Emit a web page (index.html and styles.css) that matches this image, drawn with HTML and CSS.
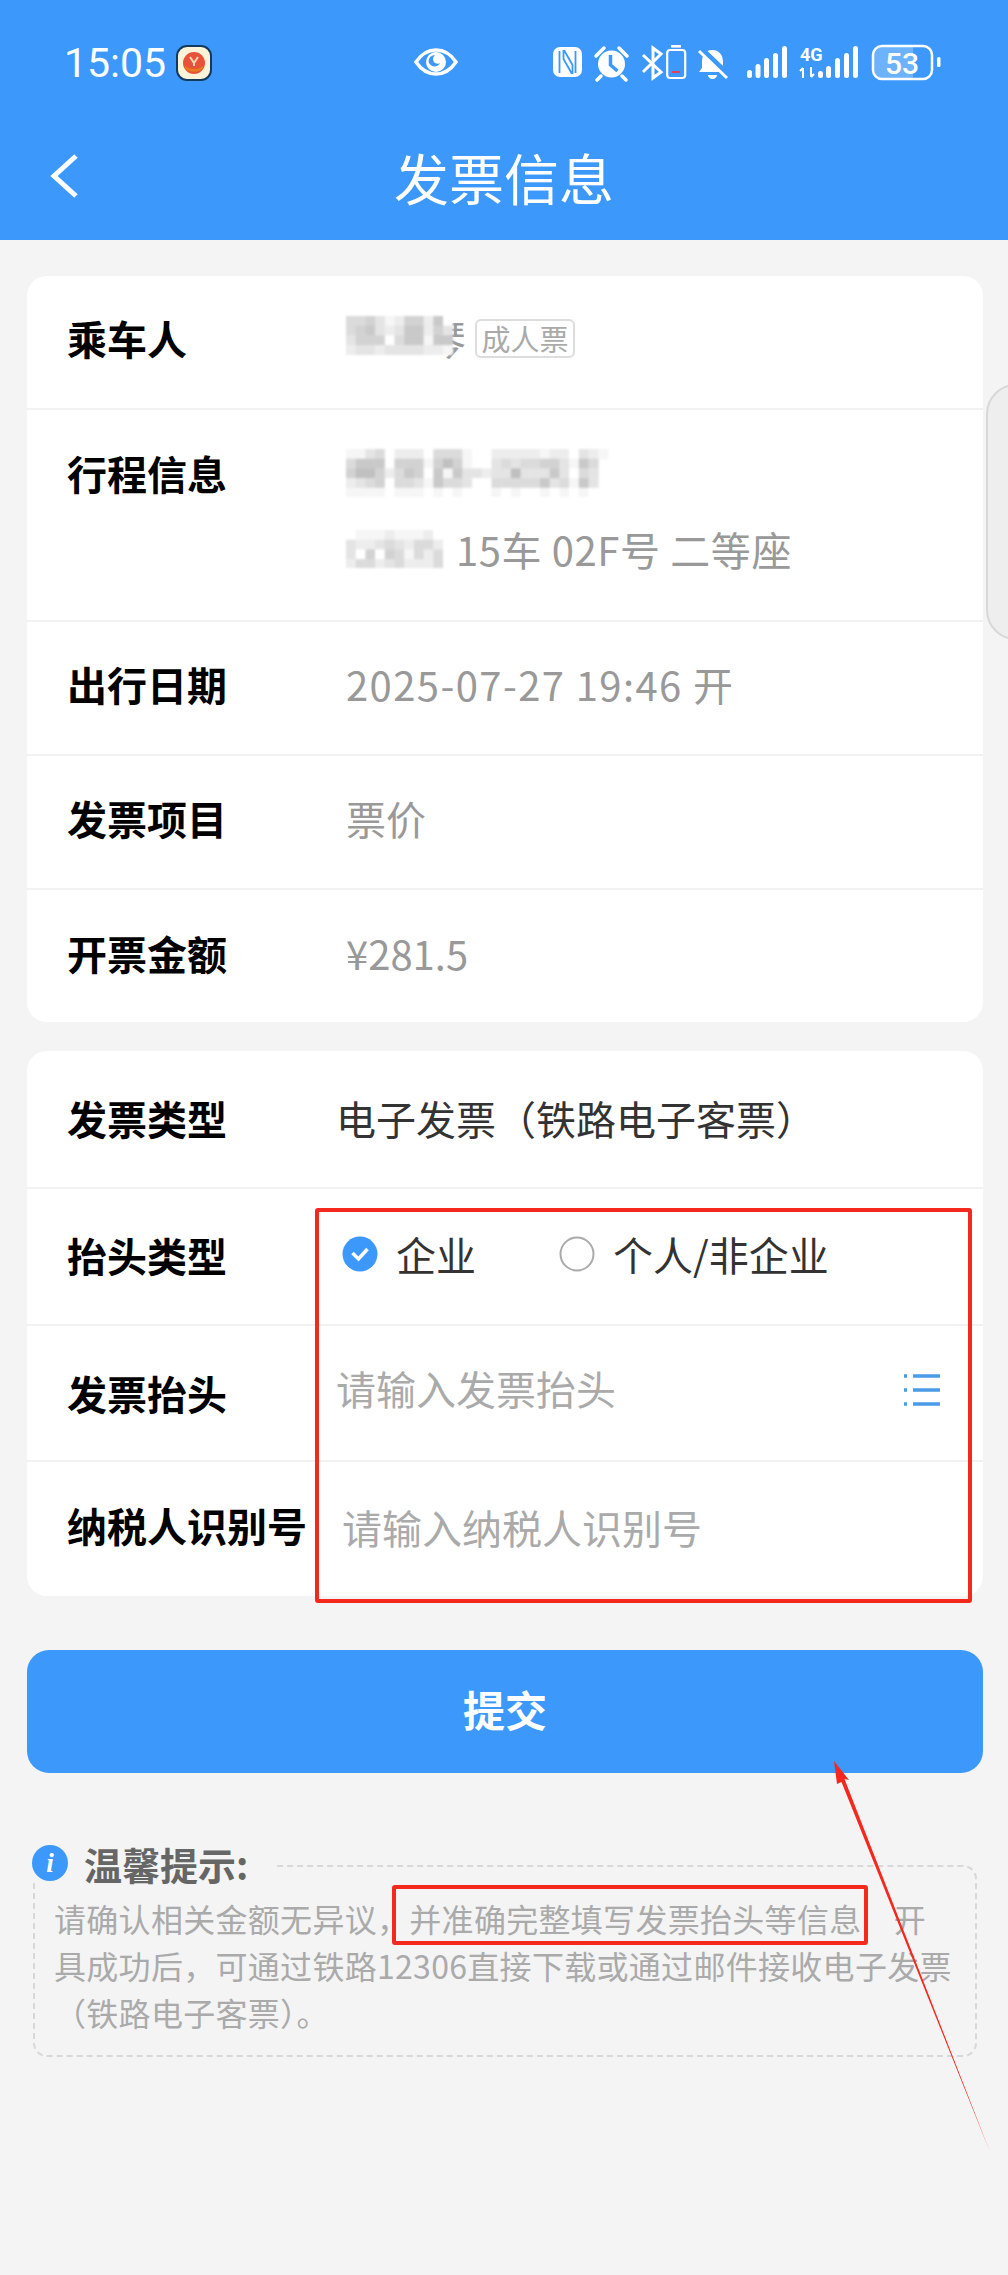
FILE: index.html
```html
<!DOCTYPE html>
<html lang="zh-cn">
<head>
    <meta charset="UTF-8">
    <meta name="viewport" content="width=device-width, initial-scale=1.0">
    <title>发票信息</title>
    <link rel="stylesheet" href="styles.css">
</head>
<body>
    <div class="page">
        <header class="header">
            <div class="status">
                <span class="time">15:05</span>
                <svg class="notif" width="36" height="36" viewBox="0 0 36 36">
                    <rect x="1" y="1" width="34" height="34" rx="10" fill="#fdf3d8" stroke="#123a5c" stroke-width="2"/>
                    <circle cx="18" cy="18" r="11" fill="#e8523a"/>
                    <path d="M9 21c5 4 13 4 18 0v2c-3 5-15 5-18 0z" fill="#e67a1e"/>
                    <path d="M14 12l4 6 4-6M18 18v3" fill="none" stroke="#fbd9b0" stroke-width="2"/>
                </svg>
                <svg class="eye" width="44" height="28" viewBox="0 0 44 28">
                    <path d="M2 14C8 5 15 2 22 2s14 3 20 12c-6 9-13 12-20 12S8 23 2 14z" fill="none" stroke="#fff" stroke-width="3.5"/>
                    <circle cx="22" cy="14" r="10" fill="#fff"/>
                    <path d="M15 11c1-3 4-4 6-4-2 2-3 5 0 8 2 1 4 1 5 0-1 3-5 4-8 3-3-2-4-4-3-7z" fill="#3c99fb"/>
                </svg>
                <svg class="status-icons" width="390" height="40" viewBox="0 0 390 40">
                    <!-- nfc -->
                    <rect x="0" y="3" width="29" height="30" rx="7" fill="#fff"/>
                    <path d="M6.500 7v22M22.500 7v22" fill="none" stroke="#3c99fb" stroke-width="1.800"/>
                    <path d="M10.500 7v8l8 14h1V21L11.500 7z" fill="none" stroke="#3c99fb" stroke-width="1.800"/>
                    <!-- alarm -->
                    <circle cx="58.500" cy="20" r="13.500" fill="#fff"/>
                    <path d="M57.500 11v10l7 6" fill="none" stroke="#3c99fb" stroke-width="3.500"/>
                    <path d="M43 12l8-8M74 12l-8-8M48 32l-4 4M69 32l4 4" fill="none" stroke="#fff" stroke-width="3.500" stroke-linecap="round"/>
                    <!-- bluetooth off -->
                    <path d="M90 11l18 17-8 6V4l8 6-18 18" fill="none" stroke="#fff" stroke-width="3"/>
                    <!-- phone battery -->
                    <rect x="114.200" y="6" width="18" height="28" rx="3" fill="none" stroke="#fff" stroke-width="2.200"/>
                    <rect x="118" y="1" width="10" height="2.600" fill="#fff"/>
                    <rect x="119" y="27" width="8" height="2" fill="#e0405a"/>
                    <!-- muted bell -->
                    <path d="M159 6c-7 0-10 6-10 12v6l-3 4h27l-3-4v-6c0-6-3-12-11-12zM155 31h9a4.500 4 0 0 1-9 0z" fill="#fff"/>
                    <path d="M147 4l28 27" stroke="#3c99fb" stroke-width="6"/>
                    <path d="M146 7l28 27" stroke="#fff" stroke-width="3"/>
                    <!-- signal -->
                    <g fill="#fff">
                        <rect x="194" y="26" width="5" height="8" rx="2.500"/>
                        <rect x="202.500" y="20" width="5" height="14" rx="2.500"/>
                        <rect x="211" y="14" width="5" height="20" rx="2.500"/>
                        <rect x="220" y="9" width="5" height="25" rx="2.500"/>
                        <rect x="229" y="2" width="5" height="32" rx="2.500"/>
                        <rect x="265" y="27" width="5" height="7" rx="2.500"/>
                        <rect x="273" y="22" width="5" height="12" rx="2.500"/>
                        <rect x="282" y="14" width="5" height="20" rx="2.500"/>
                        <rect x="291" y="9" width="5" height="25" rx="2.500"/>
                        <rect x="300" y="2" width="5" height="32" rx="2.500"/>
                    </g>
                    <text class="net" x="247" y="17">4G</text>
                    <path d="M250 34v-10M247 27l3-3M258 23v10M261 30l-3 3" fill="none" stroke="#fff" stroke-width="2"/>
                    <!-- battery -->
                    <rect x="320" y="2" width="59" height="33" rx="9" fill="none" stroke="#fff" stroke-width="2.500"/>
                    <path d="M329 3h31v31h-31a8 8 0 0 1-8-8V11a8 8 0 0 1 8-8z" fill="#fff" fill-opacity=".25"/>
                    <text class="batt" x="349" y="30">53</text>
                    <rect x="384" y="13" width="3.500" height="10" rx="1.500" fill="#fff"/>
                </svg>
            </div>
            <div class="nav">
                <svg class="back" width="30" height="46" viewBox="0 0 30 46">
                    <path d="M27 3L5 23l22 20" fill="none" stroke="#fff" stroke-width="5"/>
                </svg>
                <h1>发票信息</h1>
            </div>
        </header>

        <main class="main">
            <section class="card card-info">
                <div class="row">
                    <div class="label">乘车人</div>
                    <div class="value name-line">
                        <span class="masked">琴<svg class="mosaic mosaic-over" data-cells="44531255260|45632366253|35550466166|23323333221"></svg></span>
                        <span class="tag">成人票</span>
                    </div>
                </div>
                <div class="row">
                    <div class="label">行程信息</div>
                    <div class="value two-lines">
                        <div class="line"><svg class="mosaic" data-cells="113402220444100222221220321|46660555157510034344553164|57752465061633233733363043|23450443164430044444634163|11110111010100010100101010"></svg></div>
                        <div class="line seat-line"><svg class="mosaic" data-cells="0111211120|3223432442|3050541424|2442342224"></svg><span class="seat">15车 02F号 二等座</span></div>
                    </div>
                </div>
                <div class="row">
                    <div class="label">出行日期</div>
                    <div class="value date">2025-07-27 19:46 开</div>
                </div>
                <div class="row">
                    <div class="label">发票项目</div>
                    <div class="value">票价</div>
                </div>
                <div class="row">
                    <div class="label">开票金额</div>
                    <div class="value">¥281.5</div>
                </div>
            </section>

            <section class="card card-form">
                <div class="row">
                    <div class="label">发票类型</div>
                    <div class="value dark shift-left">电子发票（铁路电子客票）</div>
                </div>
                <div class="row">
                    <div class="label">抬头类型</div>
                    <div class="value dark radios">
                        <span class="radio">
                            <svg width="36" height="36" viewBox="0 0 36 36">
                                <circle cx="18" cy="18" r="17.500" fill="#3c99fb"/>
                                <path d="M10.500 17l6 6 9-10" fill="none" stroke="#fff" stroke-width="3.500"/>
                            </svg>
                            企业
                        </span>
                        <span class="radio">
                            <svg width="36" height="36" viewBox="0 0 36 36">
                                <circle cx="18" cy="18" r="16.500" fill="none" stroke="#aaa" stroke-width="2"/>
                            </svg>
                            个人/非企业
                        </span>
                    </div>
                </div>
                <div class="row">
                    <div class="label">发票抬头</div>
                    <div class="value shift-left input-line">
                        <span>请输入发票抬头</span>
                        <svg class="list-icon" width="36" height="34" viewBox="0 0 36 34">
                            <path d="M0 3h3M0 17h3M0 31h3M9 3h27M9 17h27M9 31h27" fill="none" stroke="#4a9be8" stroke-width="3.500"/>
                        </svg>
                    </div>
                </div>
                <div class="row">
                    <div class="label">纳税人识别号</div>
                    <div class="value hint">请输入纳税人识别号</div>
                </div>
            </section>

            <button class="submit">提交</button>

            <section class="tips">
                <div class="tips-head">
                    <span class="info">i</span>
                    <span>温馨提示:</span>
                </div>
                <div class="tips-box">
                    <p>请确认相关金额无异议，并准确完整填写发票抬头等信息　开<br>具成功后，可通过铁路12306直接下载或通过邮件接收电子发票<br>（铁路电子客票）。</p>
                </div>
            </section>
        </main>

        <!-- 截图上的标注 -->
        <div class="side-handle"></div>
        <div class="mark mark-form"></div>
        <div class="mark mark-tip"></div>
        <svg class="arrow" width="170" height="400" viewBox="0 0 170 400">
            <path d="M2 1L17 20 12.500 19 158 392 9.500 22 5 24z" fill="#f5281e"/>
        </svg>
    </div>
    <script src="script.js"></script>
</body>
</html>
```

FILE: styles.css
```css
body {
    margin: 0;
    background-color: #f4f4f4;
    font-family: "Noto Sans CJK SC", "Noto Sans", sans-serif;
    overflow: hidden;
}
.page {
    position: relative;
    width: 1008px;
    height: 2275px;
    overflow: hidden;
}
.header {
    height: 240px;
    background-color: #3c99fb;
    color: #fff;
}
.status {
    display: flex;
    align-items: flex-start;
    height: 112px;
    box-sizing: border-box;
    padding: 44px 0 0 64px;
}
.time {
    width: 100px;
    font-family: Roboto, sans-serif;
    font-size: 41px;
    line-height: 38px;
}
.notif {
    margin-left: 12px;
    margin-top: 1px;
}
.eye {
    margin-left: 202px;
    margin-top: 4px;
}
.status-icons {
    margin-left: 95px;
}
.net {
    font-family: Roboto, sans-serif;
    font-size: 18px;
    font-weight: 700;
    fill: #fff;
}
.batt {
    font-family: Roboto, sans-serif;
    font-size: 30px;
    font-weight: 500;
    fill: #fff;
    text-anchor: middle;
}
.nav {
    position: relative;
    display: flex;
    justify-content: center;
    align-items: center;
    height: 128px;
}
.nav h1 {
    margin: 0;
    font-size: 55px;
    font-weight: 400;
    line-height: 70px;
}
.back {
    position: absolute;
    left: 49px;
    top: 41px;
}
.main {
    padding: 36px 25px 0 27px;
}
.card {
    background-color: #fff;
    border-radius: 20px;
    margin-bottom: 29px;
}
.row {
    display: flex;
    align-items: flex-start;
    box-sizing: border-box;
    height: 134px;
    padding: 37px 0 0 40px;
    border-bottom: 2px solid #f2f2f2;
}
.row:last-child {
    border-bottom: none;
}
.card-info .row:nth-child(2) {
    height: 212px;
    padding-top: 38px;
}
.card-info .row:nth-child(5) {
    height: 132px;
    padding-top: 38px;
}
.card-form {
    margin-bottom: 54px;
}
.card-form .row:nth-child(1) {
    height: 138px;
    padding-top: 42px;
}
.card-form .row:nth-child(2) {
    height: 137px;
    padding-top: 41px;
}
.card-form .row:nth-child(3) {
    height: 136px;
    padding-top: 42px;
}
.card-form .row:nth-child(4) {
    height: 134px;
    padding-top: 38px;
}
.label {
    flex: none;
    width: 279px;
    font-size: 40px;
    font-weight: 700;
    line-height: 50px;
    color: #000;
    white-space: nowrap;
}
.value {
    flex: 1;
    font-size: 40px;
    line-height: 50px;
    color: #999;
    white-space: nowrap;
}
.date {
    letter-spacing: 1.4px;
}
.dark {
    color: #333;
}
.hint {
    color: #aaa;
    margin-left: -4px;
    margin-top: 2px;
}
.shift-left {
    margin-left: -10px;
}
.name-line {
    display: flex;
    align-items: center;
}
.masked {
    position: relative;
    display: inline-block;
    padding-left: 80px;
}
.mosaic {
    display: block;
    filter: blur(0.8px);
}
.mosaic-over {
    position: absolute;
    left: 0;
    top: 3px;
}
.tag {
    margin-left: 9px;
    padding: 0 4.500px;
    border: 2px solid #ddd;
    border-radius: 6px;
    font-size: 29px;
    line-height: 35px;
    color: #aaa;
}
.line {
    display: flex;
    align-items: center;
    height: 50px;
}
.two-lines .line + .line {
    margin-top: 26px;
}
.seat {
    margin-left: 13px;
    letter-spacing: 0.6px;
}
.radios {
    display: flex;
    gap: 83px;
    margin-left: -4px;
    margin-top: -1px;
}
.radio {
    display: flex;
    align-items: center;
    gap: 18px;
}
.input-line {
    display: flex;
    justify-content: space-between;
    align-items: center;
    color: #aaa;
    padding-right: 43px;
    margin-top: -5px;
}
.list-icon {
    margin-top: 4px;
}
.submit {
    display: block;
    width: 100%;
    height: 123px;
    padding-bottom: 8px;
    background-color: #3c99fb;
    color: #fff;
    border: none;
    border-radius: 22px;
    font-family: inherit;
    font-size: 42px;
    font-weight: 700;
}
.tips {
    margin: 70px 6px 0 5px;
}
.tips-head {
    position: relative;
    display: flex;
    align-items: center;
    gap: 16px;
    width: 244px;
    height: 40px;
    margin-bottom: -18px;
    background-color: #f4f4f4;
    font-size: 38px;
    font-weight: 700;
    color: #666;
}
.info {
    width: 36px;
    height: 36px;
    border-radius: 50%;
    background-color: #3c99fb;
    color: #fff;
    font-family: "Liberation Serif", serif;
    font-size: 27px;
    font-style: italic;
    line-height: 36px;
    text-align: center;
}
.tips-box {
    box-sizing: border-box;
    height: 192px;
    margin-left: 1px;
    padding: 28px 0 0 19px;
    border: 2px dashed #d8d8d8;
    border-radius: 14px;
}
.tips-box p {
    margin: 0;
    font-size: 32px;
    line-height: 47px;
    letter-spacing: 0.3px;
    color: #aaa;
    white-space: nowrap;
}
.side-handle {
    position: absolute;
    left: 986px;
    top: 384px;
    width: 60px;
    height: 256px;
    box-sizing: border-box;
    background-color: #eee;
    border: 2px solid #d8d8d8;
    border-radius: 30px;
}
.mark {
    position: absolute;
    box-sizing: border-box;
    border: 4px solid #f5281e;
    border-radius: 3px;
}
.mark-form {
    left: 315px;
    top: 1208px;
    width: 657px;
    height: 395px;
}
.mark-tip {
    left: 392px;
    top: 1885px;
    width: 476px;
    height: 60px;
}
.arrow {
    position: absolute;
    left: 832px;
    top: 1760px;
}
```

FILE: script.js
```js
// 打码区域: 每个数字是一个格子的灰度
var CELL = 9.7;
var mosaics = document.querySelectorAll('.mosaic');
for (var i = 0; i < mosaics.length; i++) {
    var rows = mosaics[i].getAttribute('data-cells').split('|');
    var svg = '';
    for (var y = 0; y < rows.length; y++) {
        for (var x = 0; x < rows[y].length; x++) {
            var g = 255 - parseInt(rows[y][x]) * 9;
            svg += '<rect x="' + x * CELL + '" y="' + y * CELL + '" width="' + (CELL + 0.5) + '" height="' + (CELL + 0.5) + '" fill="rgb(' + g + ',' + g + ',' + g + ')"/>';
        }
    }
    mosaics[i].setAttribute('width', rows[0].length * CELL);
    mosaics[i].setAttribute('height', rows.length * CELL);
    mosaics[i].innerHTML = svg;
}
```
